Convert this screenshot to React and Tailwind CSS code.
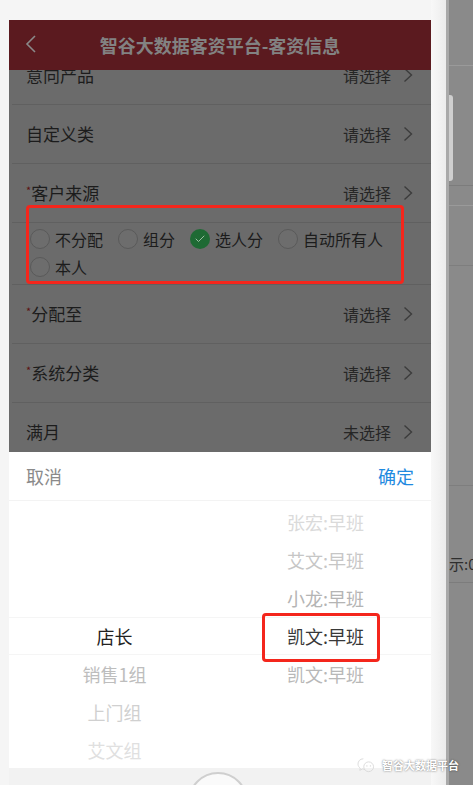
import { Check } from 'lucide-react';

const rows = [
  { label: '自定义类', value: '请选择' },
  { label: '客户来源', value: '请选择', required: true },
];

const rowsAfter = [
  { label: '分配至', value: '请选择', required: true },
  { label: '系统分类', value: '请选择', required: true },
  { label: '满月', value: '未选择' },
];

const radios = [
  { label: '不分配' },
  { label: '组分' },
  { label: '选人分', checked: true },
  { label: '自动所有人' },
  { label: '本人' },
];

const leftCol = [null, null, null, { t: '店长', c: 'text-[#222222]' }, { t: '销售1组', c: 'text-[#bdbdbd]' }, { t: '上门组', c: 'text-[#d0d0d0]' }, { t: '艾文组', c: 'text-[#e0e0e0]' }];
const rightCol = [
  { t: '张宏:早班', c: 'text-[#dadada]' },
  { t: '艾文:早班', c: 'text-[#c6c6c6]' },
  { t: '小龙:早班', c: 'text-[#b4b4b4]' },
  { t: '凯文:早班', c: 'text-[#383838]' },
  { t: '凯文:早班', c: 'text-[#b8b8b8]' },
  null,
  null,
];

function Chevron() {
  return (
    <svg width="10" height="16" viewBox="0 0 10 16" className="ml-[12px]">
      <path d="M1.5 1.5 L8.5 8 L1.5 14.5" fill="none" stroke="#3c3c3c" strokeWidth="1.4" />
    </svg>
  );
}

function FormRow({ label, value, required }) {
  return (
    <div className="ml-[3px] flex h-[59px] items-center justify-between border-b border-[#606060] pl-[14px] pr-[18px]">
      <div className="flex items-center text-[17px] text-[#1c1c1c]">
        {required && <span className="-mt-[6px] text-[11px] text-[#5c1212]">*</span>}
        {label}
      </div>
      <div className="flex items-center text-[16px] text-[#262626]">
        {value}
        <Chevron />
      </div>
    </div>
  );
}

export default function App() {
  return (
    <div className="relative flex h-[785px] w-[473px] overflow-hidden bg-[#f5f5f5] font-['Noto_Sans_CJK_SC','Liberation_Sans',sans-serif]">
      <div className="w-[9px] shrink-0" />

      <div className="flex w-[422px] shrink-0 flex-col pt-[20px]">
        <div className="relative flex h-[50px] items-center justify-center bg-[#5b1a1f]">
          <svg width="14" height="18" viewBox="0 0 14 18" className="absolute left-[15px] top-[15px]">
            <path d="M11 1 L3 9 L11 17" fill="none" stroke="#8a8a8a" strokeWidth="1.6" />
          </svg>
          <span className="text-[18px] font-bold text-[#828282]">智谷大数据客资平台-客资信息</span>
        </div>

        <div className="relative h-[382px] overflow-hidden bg-[#6b6b6b]">
          <div className="-mt-[24px]">
            <FormRow label="意向产品" value="请选择" />
            {rows.map((r) => (
              <FormRow key={r.label} {...r} />
            ))}
            <div className="ml-[3px] flex h-[62px] flex-wrap content-start gap-x-[15px] border-b border-[#606060] pl-[18px] pt-[2px]">
              {radios.map((r) => (
                <div key={r.label} className="flex h-[28px] items-center">
                  {r.checked ? (
                    <span className="flex h-[20px] w-[20px] items-center justify-center rounded-full bg-[#1e6a34]">
                      <Check size={12} strokeWidth={2} color="#9cbfa5" />
                    </span>
                  ) : (
                    <span className="h-[20px] w-[20px] rounded-full border border-[#5a5a5a] bg-[#6d6d6d]" />
                  )}
                  <span className="ml-[5px] text-[16px] text-[#1c1c1c]">{r.label}</span>
                </div>
              ))}
            </div>
            {rowsAfter.map((r) => (
              <FormRow key={r.label} {...r} />
            ))}
          </div>
          <div className="absolute left-[17px] top-[135px] h-[79px] w-[378px] rounded-[4px] border-[3px] border-[#f4261c]" />
        </div>

        <div className="relative h-[316px] bg-white">
          <div className="flex h-[49px] items-center justify-between border-b border-[#f3f3f3] px-[17px]">
            <span className="text-[18px] text-[#8a8a8a]">取消</span>
            <span className="text-[18px] text-[#1f8ae0]">确定</span>
          </div>
          <div className="grid grid-cols-2 pt-[2px]">
            {[leftCol, rightCol].map((col, ci) => (
              <div key={ci} className="flex flex-col">
                {col.map((it, i) => (
                  <div
                    key={i}
                    className={`flex h-[38px] items-center justify-center text-[18px] ${i === 3 ? 'border-y border-[#f5f5f5]' : ''} ${it ? it.c : ''}`}
                  >
                    {it ? it.t : ''}
                  </div>
                ))}
              </div>
            ))}
          </div>
          <div className="absolute left-[253px] top-[161px] h-[49px] w-[118px] rounded-[4px] border-[3px] border-[#f4261c]" />
        </div>

        <div className="h-[17px] overflow-hidden bg-[#f2f2f2]">
          <div className="ml-[179px] mt-[4px] h-[60px] w-[60px] rounded-full border-2 border-[#cfcfcf] bg-[#fafafa]" />
        </div>
      </div>

      <div className="w-[15px] shrink-0 bg-gradient-to-r from-[#f8f8f8] to-[#ececec]" />
      <div className="w-[3px] shrink-0 bg-[#a9a9a9]" />
      <div className="relative flex-1 overflow-hidden bg-[#8a8a8a]">
        <div className="mt-[65px] h-px bg-[#9a9a9a]" />
        <div className="mt-[29px] h-[86px] w-[4px] rounded-r-[3px] bg-[#cfcfcf]" />
        <div className="mt-[4px] h-px bg-[#7c7c7c]" />
        <div className="mt-[19px] h-px bg-[#9a9a9a]" />
        <div className="mt-[59px] h-px bg-[#7e7e7e]" />
        <div className="mt-[219px] h-px bg-[#7e7e7e]" />
        <div className="mt-[68px] whitespace-nowrap text-[15px] leading-[20px] text-[#2e2e2e]">示:0</div>
        <div className="mt-[8px] h-px bg-[#7c7c7c]" />
      </div>

      <div className="absolute left-[357px] top-[757px] flex items-center whitespace-nowrap text-[11px] font-bold text-white [text-shadow:0_0_2px_rgba(0,0,0,0.6)]">
        <svg width="18" height="16" viewBox="0 0 20 18" className="mr-[7px]">
          <path d="M7 2 C3 2 1 5 1 8 C1 10 2 11.5 3.5 12.5 L3 15 L6 13.5 C7 13.8 8 14 9 14" fill="none" stroke="#d9d9d9" strokeWidth="1" />
          <circle cx="13" cy="11" r="5.5" fill="none" stroke="#d9d9d9" strokeWidth="1" />
          <circle cx="11" cy="10" r="0.8" fill="#d9d9d9" />
          <circle cx="15" cy="10" r="0.8" fill="#d9d9d9" />
        </svg>
        智谷大数据平台
      </div>
    </div>
  );
}
